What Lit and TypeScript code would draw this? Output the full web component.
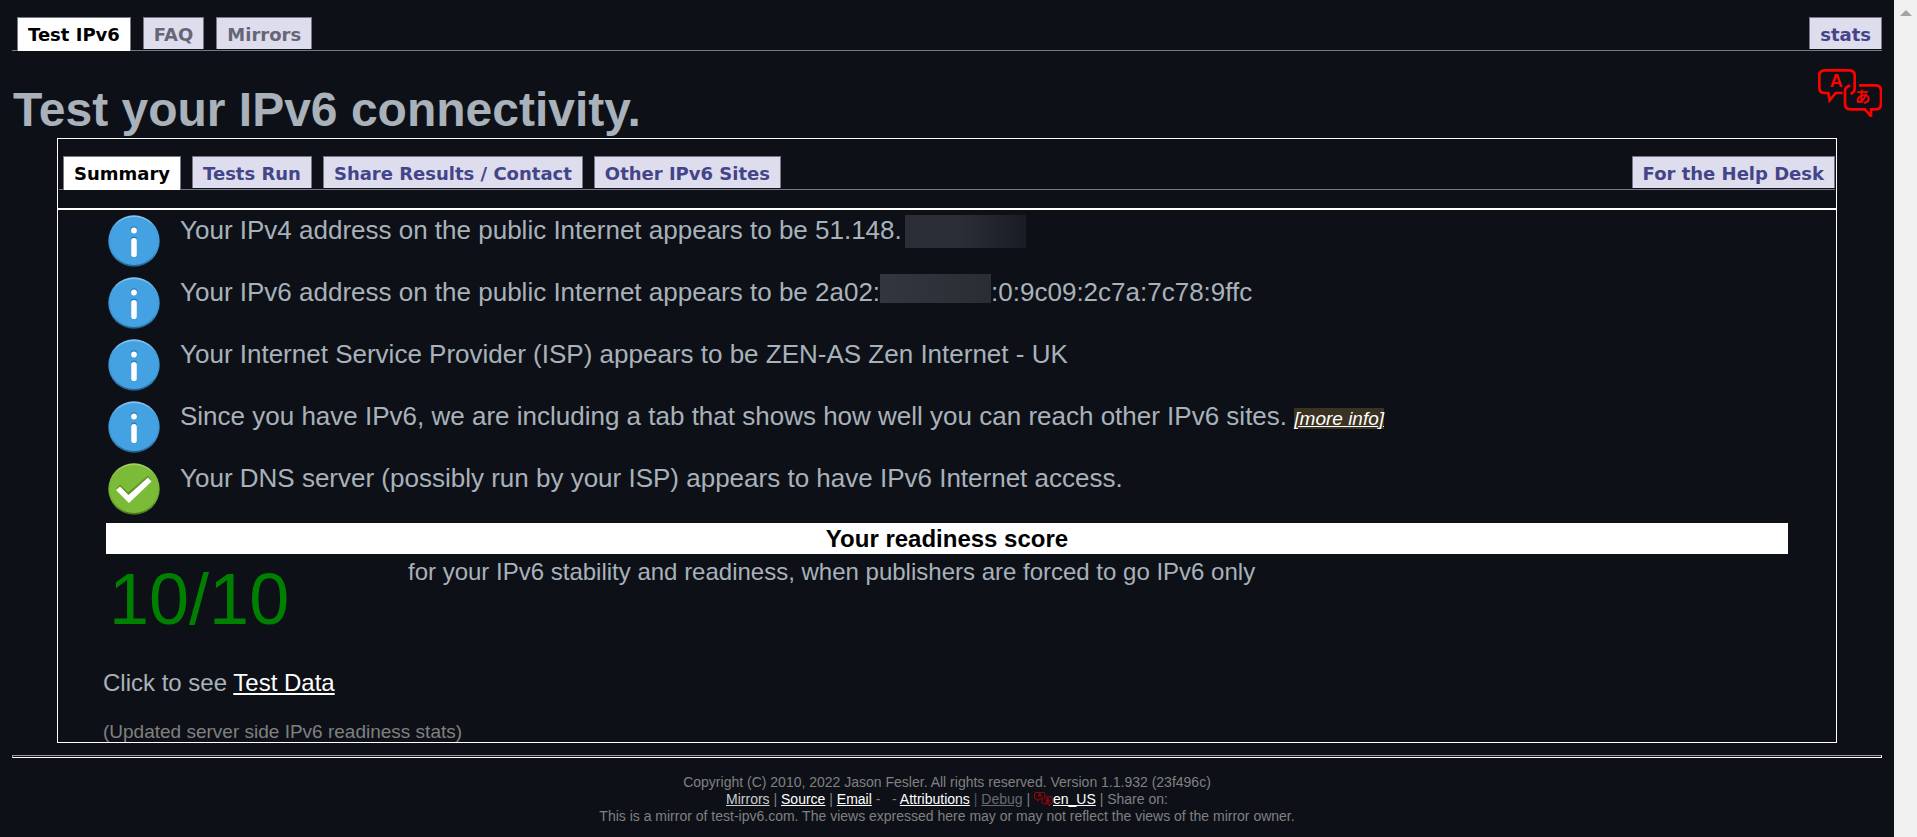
import { LitElement, html, css, svg, nothing } from "lit";
import { customElement, property, state } from "lit/decorators.js";
import { classMap } from "lit/directives/class-map.js";

const translateGlyph = html`
  <svg viewBox="54 26 192 144" aria-hidden="true" fill="none" stroke="currentColor" stroke-width="8">
    <path d="M128 98H107L89 120L85 98H74Q58 98 58 82V46Q58 30 74 30H148Q164 30 164 46V84Q164 96 152 101" />
    <path d="M151 76Q135 79 135 93V130Q135 147 152 147H195L213 168V147H226Q243 147 243 130V92Q243 75 226 75H177" />
    <g fill="currentColor" stroke="none" font-weight="700">
      <text x="109" y="81" font-size="54" text-anchor="middle" font-family="Liberation Sans, sans-serif">A</text>
      <text x="188" y="126" font-size="46" text-anchor="middle" font-family="Noto Sans CJK JP, sans-serif">あ</text>
    </g>
  </svg>
`;

@customElement("status-icon")
class StatusIcon extends LitElement {
  @property() kind: "info" | "ok" = "info";

  static styles = css`
    :host { display: block; width: 52px; height: 52px; }
    svg { display: block; width: 100%; height: 100%; }
  `;

  render() {
    const ok = this.kind === "ok";
    const mark = ok
      ? svg`<path d="M8 27L12 23L20 31L40 14L43 18L21 39Z" fill="#4b7a1e" opacity=".6" transform="translate(0 -1.5)" />
            <path d="M8 27L12 23.5L20.5 32L40 14.5L43.5 18.5L21 40Z" fill="#fff" />`
      : svg`<g fill="#27628f" opacity=".6"><circle cx="26" cy="14.5" r="3.3"/><rect x="23" y="21.5" width="6" height="19" rx="3"/></g>
            <circle cx="26" cy="15.5" r="2.9" fill="#fff" /><rect x="23.2" y="23" width="5.6" height="19" rx="2.8" fill="#fff" />`;
    return html`
      <svg viewBox="0 0 52 52" role="img" aria-label=${ok ? "OK" : "Information"}>
        <defs>
          <linearGradient id="rim" x1="0" y1="0" x2="0" y2="1">
            <stop offset="0" stop-color=${ok ? "#a5d36c" : "#8cc8f2"} />
            <stop offset=".25" stop-color=${ok ? "#7cbb38" : "#44a2e3"} />
            <stop offset=".75" stop-color=${ok ? "#6eaa2c" : "#3a92d0"} />
            <stop offset="1" stop-color=${ok ? "#46721a" : "#235f8e"} />
          </linearGradient>
        </defs>
        <circle cx="26" cy="26" r="25.7" fill="url(#rim)" />
        <circle cx="26" cy="26" r="24" fill=${ok ? "#7cbb38" : "#44a2e3"} />
        ${mark}
      </svg>
    `;
  }
}

@customElement("app-root")
class AppRoot extends LitElement {
  @state() private tab = "Summary";

  static styles = css`
    :host {
      display: flex;
      min-height: 100vh;
      background: #0d1117;
      color: #a9b1ba;
      font-family: "Liberation Sans", Arial, sans-serif;
      font-size: 24px;
      line-height: 28px;
    }
    a { color: #fff; }
    .page { flex: 1; min-width: 0; padding: 17px 12px 0; box-sizing: border-box; }
    .scroll { width: 23px; background: #f0f0f0; display: flex; justify-content: center; padding-top: 10px; box-sizing: border-box; }
    .scroll svg { width: 12px; height: 6px; }

    .tabs {
      display: flex;
      align-items: flex-start;
      gap: 12px;
      padding-left: 5px;
      height: 33px;
      border-bottom: 1px solid #778;
    }
    .tab {
      display: block;
      box-sizing: border-box;
      height: 32px;
      margin: 0;
      padding: 0 10px;
      border: 1px solid #778;
      border-bottom: 0;
      background: #dde;
      color: #448;
      font: bold 18px/33px "DejaVu Sans", Verdana, sans-serif;
      text-decoration: none;
      white-space: nowrap;
      cursor: pointer;
    }
    .tab.muted { color: #667; }
    .tab.active { height: 34px; background: #fff; color: #000; }
    .tab.end { margin-left: auto; }

    .heading { display: flex; justify-content: space-between; align-items: flex-start; padding: 18px 0 0 1px; }
    h1 { margin: 12px 0 0; font-size: 48px; line-height: 57px; }
    .lang { color: #f00; width: 64px; height: 48px; }
    .lang svg { display: block; width: 100%; height: 100%; }

    .panel { margin: 0 45px; border: 1px solid #fff; }
    .panel .tabs { margin: 17px 1px 18px; padding-left: 4px; gap: 11px; }
    .body { border-top: 2px solid #fff; padding: 3px 46px 0 45px; }

    .results { list-style: none; margin: 0; padding: 0; }
    .results li { display: flex; gap: 20px; height: 62px; padding-left: 5px; font-size: 26px; line-height: 34px; }
    .results status-icon { flex: none; margin-top: 2px; }
    .masked { display: inline-block; vertical-align: top; }
    .masked.v4 { width: 121px; height: 33px; margin: 2px 0 -2px 3px; background: linear-gradient(90deg, #2b2e36 0 45%, #191c24); }
    .masked.v6 { width: 111px; height: 29px; margin-top: -1px; background: linear-gradient(90deg, #33363e, #2a2d34); }
    .more { font-size: 19px; font-style: italic; background: #3b3222; }

    .score { margin: 0 2px 0 3px; }
    .score h2 { margin: 0; background: #fff; color: #000; text-align: center; font-size: 24px; line-height: 31px; }
    .score-row { display: grid; grid-template-columns: 299px 1fr; padding: 4px 2px 0 3px; }
    .points { font-size: 72px; line-height: 83px; color: green; }
    .data { margin: 28px 0 25px; }
    .updated { margin: 0; font-size: 19px; line-height: 20px; color: #808080; }

    hr { margin: 12px 0 16px; border: 1px solid; border-color: #9a9a9a #fff #fff #9a9a9a; height: 1px; }
    footer { text-align: center; font-size: 14px; line-height: 17px; color: #808080; }
    footer p { margin: 0; }
    .dim { color: #50555c; }
    .dim a { color: #666b72; }
    .soft { color: #ccc; }
    .mini { display: inline-block; width: 19px; height: 14px; color: #c00; vertical-align: 2px; margin: -4px 0; }
    .mini svg { display: block; width: 100%; height: 100%; }
  `;

  private panelTab(label: string, end = false) {
    const on = this.tab === label;
    return html`<button
      class=${classMap({ tab: true, active: on, end })}
      role="tab"
      aria-selected=${on ? "true" : "false"}
      @click=${() => (this.tab = label)}
    >${label}</button>`;
  }

  private result(text: unknown, kind = "info") {
    return html`<li><status-icon kind=${kind}></status-icon><span>${text}</span></li>`;
  }

  private summary() {
    return html`
      <ul class="results">
        ${this.result(html`Your IPv4 address on the public Internet appears to be 51.148.<span class="masked v4"></span>`)}
        ${this.result(html`Your IPv6 address on the public Internet appears to be 2a02:<span class="masked v6"></span>:0:9c09:2c7a:7c78:9ffc`)}
        ${this.result("Your Internet Service Provider (ISP) appears to be ZEN-AS Zen Internet - UK")}
        ${this.result(html`Since you have IPv6, we are including a tab that shows how well you can reach other IPv6 sites. <a class="more" href="#info">[more info]</a>`)}
        ${this.result("Your DNS server (possibly run by your ISP) appears to have IPv6 Internet access.", "ok")}
      </ul>
      <section class="score">
        <h2>Your readiness score</h2>
        <div class="score-row">
          <div class="points">10/10</div>
          <div>for your IPv6 stability and readiness, when publishers are forced to go IPv6 only</div>
        </div>
      </section>
      <p class="data">Click to see <a href="#data">Test Data</a></p>
      <p class="updated">(Updated server side IPv6 readiness stats)</p>
    `;
  }

  render() {
    return html`
      <div class="page">
        <nav class="tabs">
          <a class="tab active" href="#test">Test IPv6</a>
          <a class="tab muted" href="#faq">FAQ</a>
          <a class="tab muted" href="#mirrors">Mirrors</a>
          <a class="tab end" href="#stats">stats</a>
        </nav>
        <header class="heading">
          <h1>Test your IPv6 connectivity.</h1>
          <a class="lang" href="#language" aria-label="Language">${translateGlyph}</a>
        </header>
        <main class="panel">
          <div class="tabs" role="tablist">
            ${["Summary", "Tests Run", "Share Results / Contact", "Other IPv6 Sites"].map((t) => this.panelTab(t))}
            ${this.panelTab("For the Help Desk", true)}
          </div>
          <div class="body">${this.tab === "Summary" ? this.summary() : nothing}</div>
        </main>
        <hr />
        <footer>
          <p>Copyright (C) 2010, 2022 Jason Fesler. All rights reserved. Version 1.1.932 (23f496c)</p>
          <p><a class="soft" href="#mirrors">Mirrors</a> | <a href="#source">Source</a> | <a href="#email">Email</a> - &nbsp; - <a href="#attributions">Attributions</a> <span class="dim">| <a href="#debug">Debug</a></span> | <span class="mini">${translateGlyph}</span><a href="#locale">en_US</a> | Share on:</p>
          <p>This is a mirror of test-ipv6.com. The views expressed here may or may not reflect the views of the mirror owner.</p>
        </footer>
      </div>
      <div class="scroll" aria-hidden="true">
        <svg viewBox="0 0 12 6"><path d="M0 6L6 0L12 6Z" fill="#a3a3a3" /></svg>
      </div>
    `;
  }
}
